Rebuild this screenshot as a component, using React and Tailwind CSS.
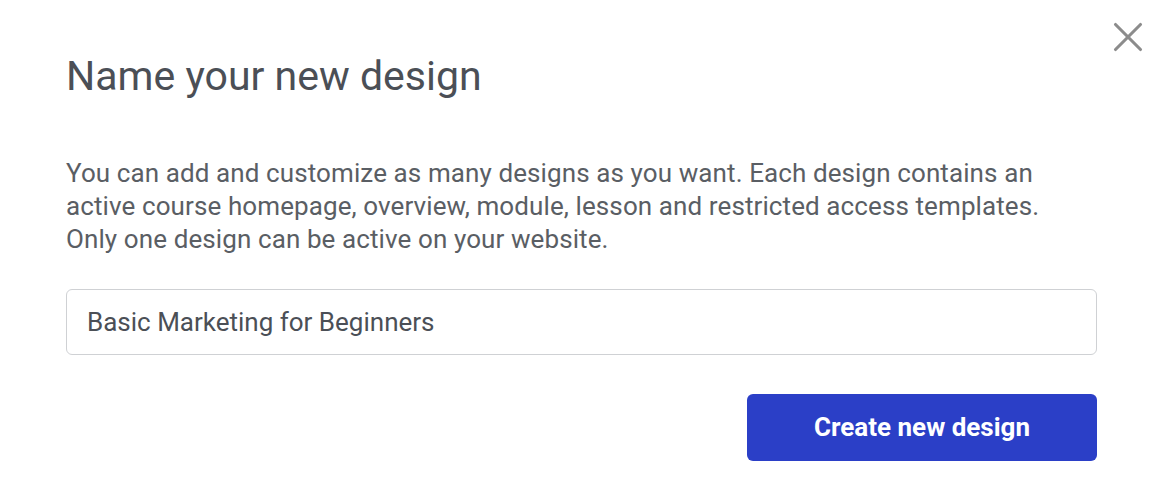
import { X } from "lucide-react";

export default function App() {
  return (
    <div
      className="relative w-[1158px] h-[489px] bg-white text-[#4b4f56]"
      style={{ fontFamily: "Roboto, 'Liberation Sans', sans-serif" }}
    >
      {/* close */}
      <button className="absolute left-[1103px] top-[12px] text-[#8c8c8c]">
        <X size={50} strokeWidth={1.5} />
      </button>

      <div className="pl-[66px] pr-[61px] pt-[52px]">
        <h2 className="text-[41px] leading-[48px] font-normal text-[#4b4f56]">
          Name your new design
        </h2>

        <p className="mt-[57px] text-[26px] leading-[33px] tracking-[0.1px] text-[#5a5e64]">
          You can add and customize as many designs as you want. Each design contains an
          <br />
          active course homepage, overview, module, lesson and restricted access templates.
          <br />
          Only one design can be active on your website.
        </p>

        <input
          type="text"
          defaultValue="Basic Marketing for Beginners"
          className="mt-[33px] block w-full h-[66px] rounded-[6px] border border-[#cfd1d4] px-[20px] text-[26px] text-[#4b4f56] outline-none"
        />

        <div className="flex justify-end mt-[39px]">
          <button className="w-[350px] h-[67px] rounded-[6px] bg-[#2b3fc7] text-white text-[26px] font-bold">
            Create new design
          </button>
        </div>
      </div>
    </div>
  );
}
